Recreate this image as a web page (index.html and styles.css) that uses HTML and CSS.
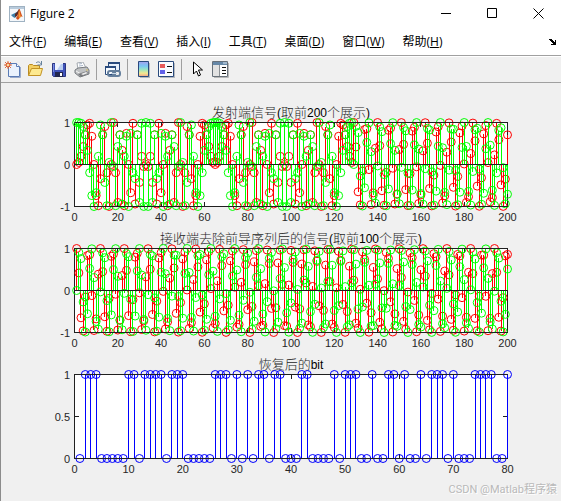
FILE: index.html
```html
<!DOCTYPE html>
<html lang="zh-CN">
<head>
<meta charset="utf-8">
<meta name="viewport" content="width=device-width, initial-scale=1">
<title>Figure 2</title>
<link rel="stylesheet" href="styles.css">
</head>
<body>
<header class="titlebar">
  <svg class="app-icon" width="16" height="16" viewBox="0 0 16 16" aria-hidden="true">
    <rect x=".5" y=".5" width="15" height="15" fill="#f4f7fa" stroke="#9fb2c2"/>
    <path d="M1 1h14v2H1z" fill="#b9cbdc"/>
    <path d="M2 9l4-2 2-1 1 2-3 4-2-1z" fill="#3d7fa8"/>
    <path d="M6 8l2-2 2-3 1 1-3 6-2 1z" fill="#5a2a25"/>
    <path d="M10 3c2 1 2 6 4 8-2-1-3 0-4 2-1 1-2 1-3-1 2-2 2-6 3-9z" fill="#d4511d"/>
    <path d="M10 4c1 2 1 5 2 7l-2 1c-1-2 0-6 0-8z" fill="#f49b34"/>
  </svg>
  <h1 class="window-title">Figure 2</h1>
  <div class="window-controls">
    <button type="button" aria-label="Minimize"><svg width="11" height="11" viewBox="0 0 11 11"><path d="M0 5.500h10"/></svg></button>
    <button type="button" aria-label="Maximize"><svg width="11" height="11" viewBox="0 0 11 11"><path d="M.5 .5h9v9h-9z"/></svg></button>
    <button type="button" aria-label="Close"><svg width="11" height="11" viewBox="0 0 11 11"><path d="M.5 .5l10 10M10.500 .5l-10 10"/></svg></button>
  </div>
</header>
<nav class="menubar">
  <button type="button">文件(<u>F</u>)</button>
  <button type="button">编辑(<u>E</u>)</button>
  <button type="button">查看(<u>V</u>)</button>
  <button type="button">插入(<u>I</u>)</button>
  <button type="button">工具(<u>T</u>)</button>
  <button type="button">桌面(<u>D</u>)</button>
  <button type="button">窗口(<u>W</u>)</button>
  <button type="button">帮助(<u>H</u>)</button>
  <button type="button" class="dock" aria-label="Dock figure"><svg width="8" height="6" viewBox="0 0 8 6" shape-rendering="crispEdges"><path d="M0 0h3v1h1v1h1v1h1V1h1v5H2V5h2V4H3V3H2V2H1V1H0z" fill="#000"/></svg></button>
</nav>
<div class="toolbar" role="toolbar" aria-label="Figure tools">
  <button type="button" aria-label="New figure"><svg width="17" height="17" viewBox="0 0 17 17">
    <path d="M4.500 2.500h8l3 3v10h-11z" fill="#eaf2fd" stroke="#5a7bb5"/><path d="M12.500 2.500v3h3" fill="#fff" stroke="#5a7bb5"/><path d="M16.500 6v10.500H6" fill="none" stroke="#9caccc"/>
    <path d="M4 0v8M0 4h8M1 1l6 6M7 1L1 7" stroke="#dc7044"/><circle cx="4" cy="4" r="2" fill="#fbd9a0" stroke="#d8491c"/></svg></button>
  <button type="button" aria-label="Open file"><svg width="17" height="17" viewBox="0 0 17 17">
    <path d="M1.500 14.500V4.500l1-1h3l1 1h6v3" fill="#f3cf63" stroke="#b98a21"/><path d="M1.500 14.500l3-7h11l-2 7z" fill="#fde98f" stroke="#c29224"/><path d="M9 2c2-2 4-1 5 1M14.500 0v4h-4" fill="none" stroke="#64809c"/></svg></button>
  <button type="button" aria-label="Save figure"><svg width="16" height="16" viewBox="0 0 16 16">
    <path d="M1.500 1.500h13v13h-12l-1-1z" fill="#4053ba" stroke="#2b3582"/><path d="M4 1h8v7H4z" fill="#edf2fd"/><path d="M10 2h2v6l-6 0z" fill="#b9cdf0"/><path d="M4 10h8v5H4z" fill="#22264e"/><path d="M9 11h2v3H9z" fill="#fff"/><path d="M2 2h1v8H2z" fill="#7b8de0"/></svg></button>
  <button type="button" aria-label="Print figure"><svg width="16" height="16" viewBox="0 0 16 16">
    <path d="M4 7L3 1l6-1 3 6z" fill="#fff" stroke="#a3a9b0"/><path d="M5 2l3-.5M5 4l4-.5" stroke="#a7b5c8"/><path d="M1 8l3-2 9-1 2 3v4l-9 3-5-4z" fill="#bfc1c3" stroke="#777b80"/><path d="M2 9l5 3 7-3" fill="none" stroke="#f4f4f4"/><path d="M4 12l9-3 2 2-8 4z" fill="#77797d"/><path d="M7 12l5-2 2 1-5 2z" fill="#eee"/><path d="M12 8h2" stroke="#cdb85d"/></svg></button>
  <span class="separator"></span>
  <button type="button" aria-label="Link plot"><svg width="17" height="17" viewBox="0 0 17 17">
    <path d="M4.500 1.500h11v8h-11z" fill="#e7effa" stroke="#294a7d"/><path d="M4 1h12v2H4z" fill="#294a7d"/><path d="M1.500 5.500h10v8h-10z" fill="#f6faff" stroke="#294a7d"/><path d="M1 5h11v2H1z" fill="#294a7d"/>
    <g fill="none" stroke="#647f9d" stroke-width="2"><rect x="4" y="10" width="7" height="5" rx="2"/><rect x="9" y="10" width="7" height="5" rx="2"/></g><path d="M7 12.500h6" stroke="#c8d7e6"/></svg></button>
  <span class="separator"></span>
  <button type="button" aria-label="Insert colorbar"><svg width="12" height="17" viewBox="0 0 12 17">
    <defs><linearGradient id="spectrum" x2="0" y2="1"><stop stop-color="#a5a0ed"/><stop offset=".3" stop-color="#79c6f4"/><stop offset=".55" stop-color="#9de6c1"/><stop offset=".78" stop-color="#f3e990"/><stop offset="1" stop-color="#f2a08a"/></linearGradient></defs>
    <path d="M2 2h10v15H2z" fill="#b6b9be"/><path d="M.5 .5h10v15H.5z" fill="url(#spectrum)" stroke="#294a7d"/></svg></button>
  <button type="button" aria-label="Insert legend"><svg width="17" height="17" viewBox="0 0 17 17">
    <path d="M2 2h15v15H2z" fill="#b6b9be"/><path d="M.5 .5h15v15H.5z" fill="#f8fbff" stroke="#294a7d"/><path d="M2 3h5v4H2z" fill="#e75b5b"/><path d="M2 9h5v4H2z" fill="#6060e8"/><path d="M9 5.500h5M9 11.500h5" stroke="#111"/></svg></button>
  <span class="separator"></span>
  <button type="button" aria-label="Edit plot"><svg width="10" height="17" viewBox="0 0 10 17">
    <path d="M.5 1v12l3-3 2 5 2-1-2-5h4z" fill="#fff" stroke="#000"/></svg></button>
  <button type="button" aria-label="Open property inspector"><svg width="17" height="17" viewBox="0 0 17 17">
    <path d="M.5 .5h15v15H.5z" fill="#fff" stroke="#68717a"/><path d="M1 1h14v3H1z" fill="#6688a8"/><path d="M11 2h4" stroke="#dce9f4"/><path d="M1 4h6v11H1z" fill="#e2e2e2"/><path d="M7.500 4v11" stroke="#8b8f94"/><path d="M10 6.500h4M10 9.500h4M10 12.500h4" stroke="#111"/><path d="M16.500 2v14.500H2" fill="none" stroke="#b8b8b8"/></svg></button>
</div>
<main class="figure">
  <section class="chart">
    <h2>发射端信号<span class="latin">(</span>取前<span class="latin">200</span>个展示<span class="latin">)</span></h2>
    <svg class="plot" id="transmitted"></svg>
  </section>
  <section class="chart">
    <h2>接收端去除前导序列后的信号<span class="latin">(</span>取前<span class="latin">100</span>个展示<span class="latin">)</span></h2>
    <svg class="plot" id="received"></svg>
  </section>
  <section class="chart">
    <h2>恢复后的<span class="latin">bit</span></h2>
    <svg class="plot" id="bits"></svg>
  </section>
  <p class="watermark">CSDN @Matlab程序猿</p>
</main>
<script src="plots.js"></script>
</body>
</html>
```
FILE: styles.css
```css
* { box-sizing: border-box; }

body {
  margin: 0;
  min-height: 100vh;
  display: flex;
  flex-direction: column;
  border-left: 1px solid #8c8c8c;
  background: #f0f0f0;
  color: #000;
  font: 12px/16px "Open Sans", "Noto Sans CJK SC", sans-serif;
}

button {
  margin: 0;
  padding: 0;
  border: 0;
  background: none;
  color: inherit;
  font: inherit;
}

svg { display: block; }

.titlebar {
  display: flex;
  align-items: center;
  height: 27px;
  padding-left: 8px;
  background: #fff;
}

.window-title {
  flex: 1;
  margin: 0 0 0 5px;
  font-size: 12px;
  font-weight: 400;
}

.window-controls { display: flex; }

.window-controls button {
  display: grid;
  place-items: center;
  width: 46px;
  height: 27px;
}

.window-controls svg {
  fill: none;
  stroke: #000;
}

.menubar {
  display: flex;
  align-items: center;
  gap: 18px;
  height: 29px;
  padding: 2px 4px 0 8px;
  background: #fff;
  border-bottom: 1px solid #a0a0a0;
  white-space: nowrap;
}

.dock { margin-left: auto; }

.toolbar {
  display: flex;
  align-items: center;
  height: 27px;
  border-top: 1px solid #fff;
  border-bottom: 1px solid #a0a0a0;
}

.toolbar button {
  display: grid;
  place-items: center;
  width: 23px;
  height: 23px;
}

.separator {
  width: 1px;
  height: 21px;
  margin: 0 4px 0 3px;
  background: #a0a0a0;
}

.figure {
  position: relative;
  flex: 1;
  padding: 22px 53px 0 73px;
}

.chart { padding-bottom: 24px; }

.chart h2 {
  margin: 0;
  height: 17px;
  color: #262626;
  font: 300 13px/14px "Noto Sans CJK SC", sans-serif;
  text-align: center;
  white-space: nowrap;
}

.chart .latin {
  color: #000;
  font: 12px/14px "Liberation Sans", sans-serif;
}

.plot {
  width: 100%;
  height: 85px;
  overflow: visible;
}

.plot text {
  fill: #262626;
  font: 11px "Liberation Sans", sans-serif;
}

.x-label { text-anchor: middle; }
.y-label { text-anchor: end; }
.panel { fill: #fff; }

.axis {
  fill: none;
  stroke: #202020;
  shape-rendering: crispEdges;
}

.stems {
  fill: none;
  shape-rendering: crispEdges;
}

.markers { fill: none; }
.red { stroke: #f00; }
.green { stroke: #0f0; }
.blue { stroke: #00f; }

.watermark {
  position: absolute;
  right: 4px;
  bottom: 3px;
  margin: 0;
  color: #b9b9b9;
  font: 11px/16px Roboto, "Noto Sans CJK SC", sans-serif;
  text-shadow: 1px 1px #fff;
}
```
FILE: plots.js
```js
const PREAMBLE = 128;
const TONE_STEP = 65.28 * Math.PI / 180;

const range = (count) => Array.from({ length: count }, (_, i) => i);
const tone = (n) => TONE_STEP * n;
const chirp = (n) => Math.PI * n * n / 64;
const sentPhase = (n) => n < PREAMBLE ? chirp(n) : tone(n - PREAMBLE);

const ones = new Set([2, 3, 4, 10, 11, 13, 14, 15, 16, 18, 19, 20, 26, 27, 28,
  30, 32, 34, 35, 37, 38, 42, 43, 48, 50, 51, 52, 55, 58, 59, 61, 64, 66, 67,
  68, 70, 74, 75, 76, 77, 80]);

const charts = [
  {
    id: "transmitted", xMax: 200, xStep: 20, yMin: -1, yTicks: [-1, 0, 1],
    series: [
      { color: "red", values: range(200).map((n) => n < PREAMBLE ? Math.sin(sentPhase(n)) : Math.cos(sentPhase(n))) },
      { color: "green", values: range(200).map((n) => n < PREAMBLE ? Math.cos(sentPhase(n)) : Math.sin(sentPhase(n))) }
    ]
  },
  {
    id: "received", xMax: 200, xStep: 20, yMin: -1, yTicks: [-1, 0, 1],
    series: [
      { color: "red", values: range(200).map((n) => Math.cos(tone(n))) },
      { color: "green", values: range(200).map((n) => Math.sin(tone(n))) }
    ]
  },
  {
    id: "bits", xMax: 80, xStep: 10, yMin: 0, yTicks: [0, 0.5, 1],
    series: [{ color: "blue", values: range(80).map((n) => ones.has(n + 1) ? 1 : 0) }]
  }
];

function draw(chart) {
  const svg = document.getElementById(chart.id);
  const box = svg.getBoundingClientRect();
  const width = Math.round(box.width) - 1;
  const height = Math.round(box.height) - 1;
  const x = (v) => v / chart.xMax * width + 0.5;
  const y = (v) => (1 - v) / (1 - chart.yMin) * height + 0.5;
  const snap = (v) => Math.floor(v) + 0.5;
  const parts = [`<rect class="panel" width="${width}" height="${height}"/>`];

  let axis = `M.5 .5H${width + 0.5}V${height + 0.5}H.5Z`;
  for (let v = 0; v <= chart.xMax; v += chart.xStep) {
    const px = snap(x(v));
    axis += `M${px} 0v5M${px} ${height + 1}v-5`;
    parts.push(`<text class="x-label" x="${x(v)}" y="${height + 15}">${v}</text>`);
  }
  for (const v of chart.yTicks) {
    axis += `M0 ${y(v)}h5M${width + 1} ${y(v)}h-5`;
    parts.push(`<text class="y-label" x="-4" y="${y(v) + 4}">${v}</text>`);
  }
  parts.push(`<path class="axis" d="${axis}"/>`);

  for (const { color, values } of chart.series) {
    let stems = "";
    let circles = "";
    values.forEach((v, i) => {
      stems += `M${snap(x(i + 1))} ${y(0)}V${y(v)}`;
      circles += `<circle cx="${x(i + 1)}" cy="${y(v)}" r="4"/>`;
    });
    parts.push(`<path class="stems ${color}" d="${stems}"/>`);
    parts.push(`<g class="markers ${color}">${circles}</g>`);
  }
  if (chart.yMin < 0) {
    parts.push(`<path class="axis" d="M0 ${y(0)}H${width + 1}"/>`);
  }
  parts.push(`<path class="axis" d="M.5 .5H${width + 0.5}M.5 ${height + 0.5}H${width + 0.5}"/>`);
  svg.innerHTML = parts.join("");
}

const drawAll = () => charts.forEach(draw);
drawAll();
window.addEventListener("resize", drawAll);
```
